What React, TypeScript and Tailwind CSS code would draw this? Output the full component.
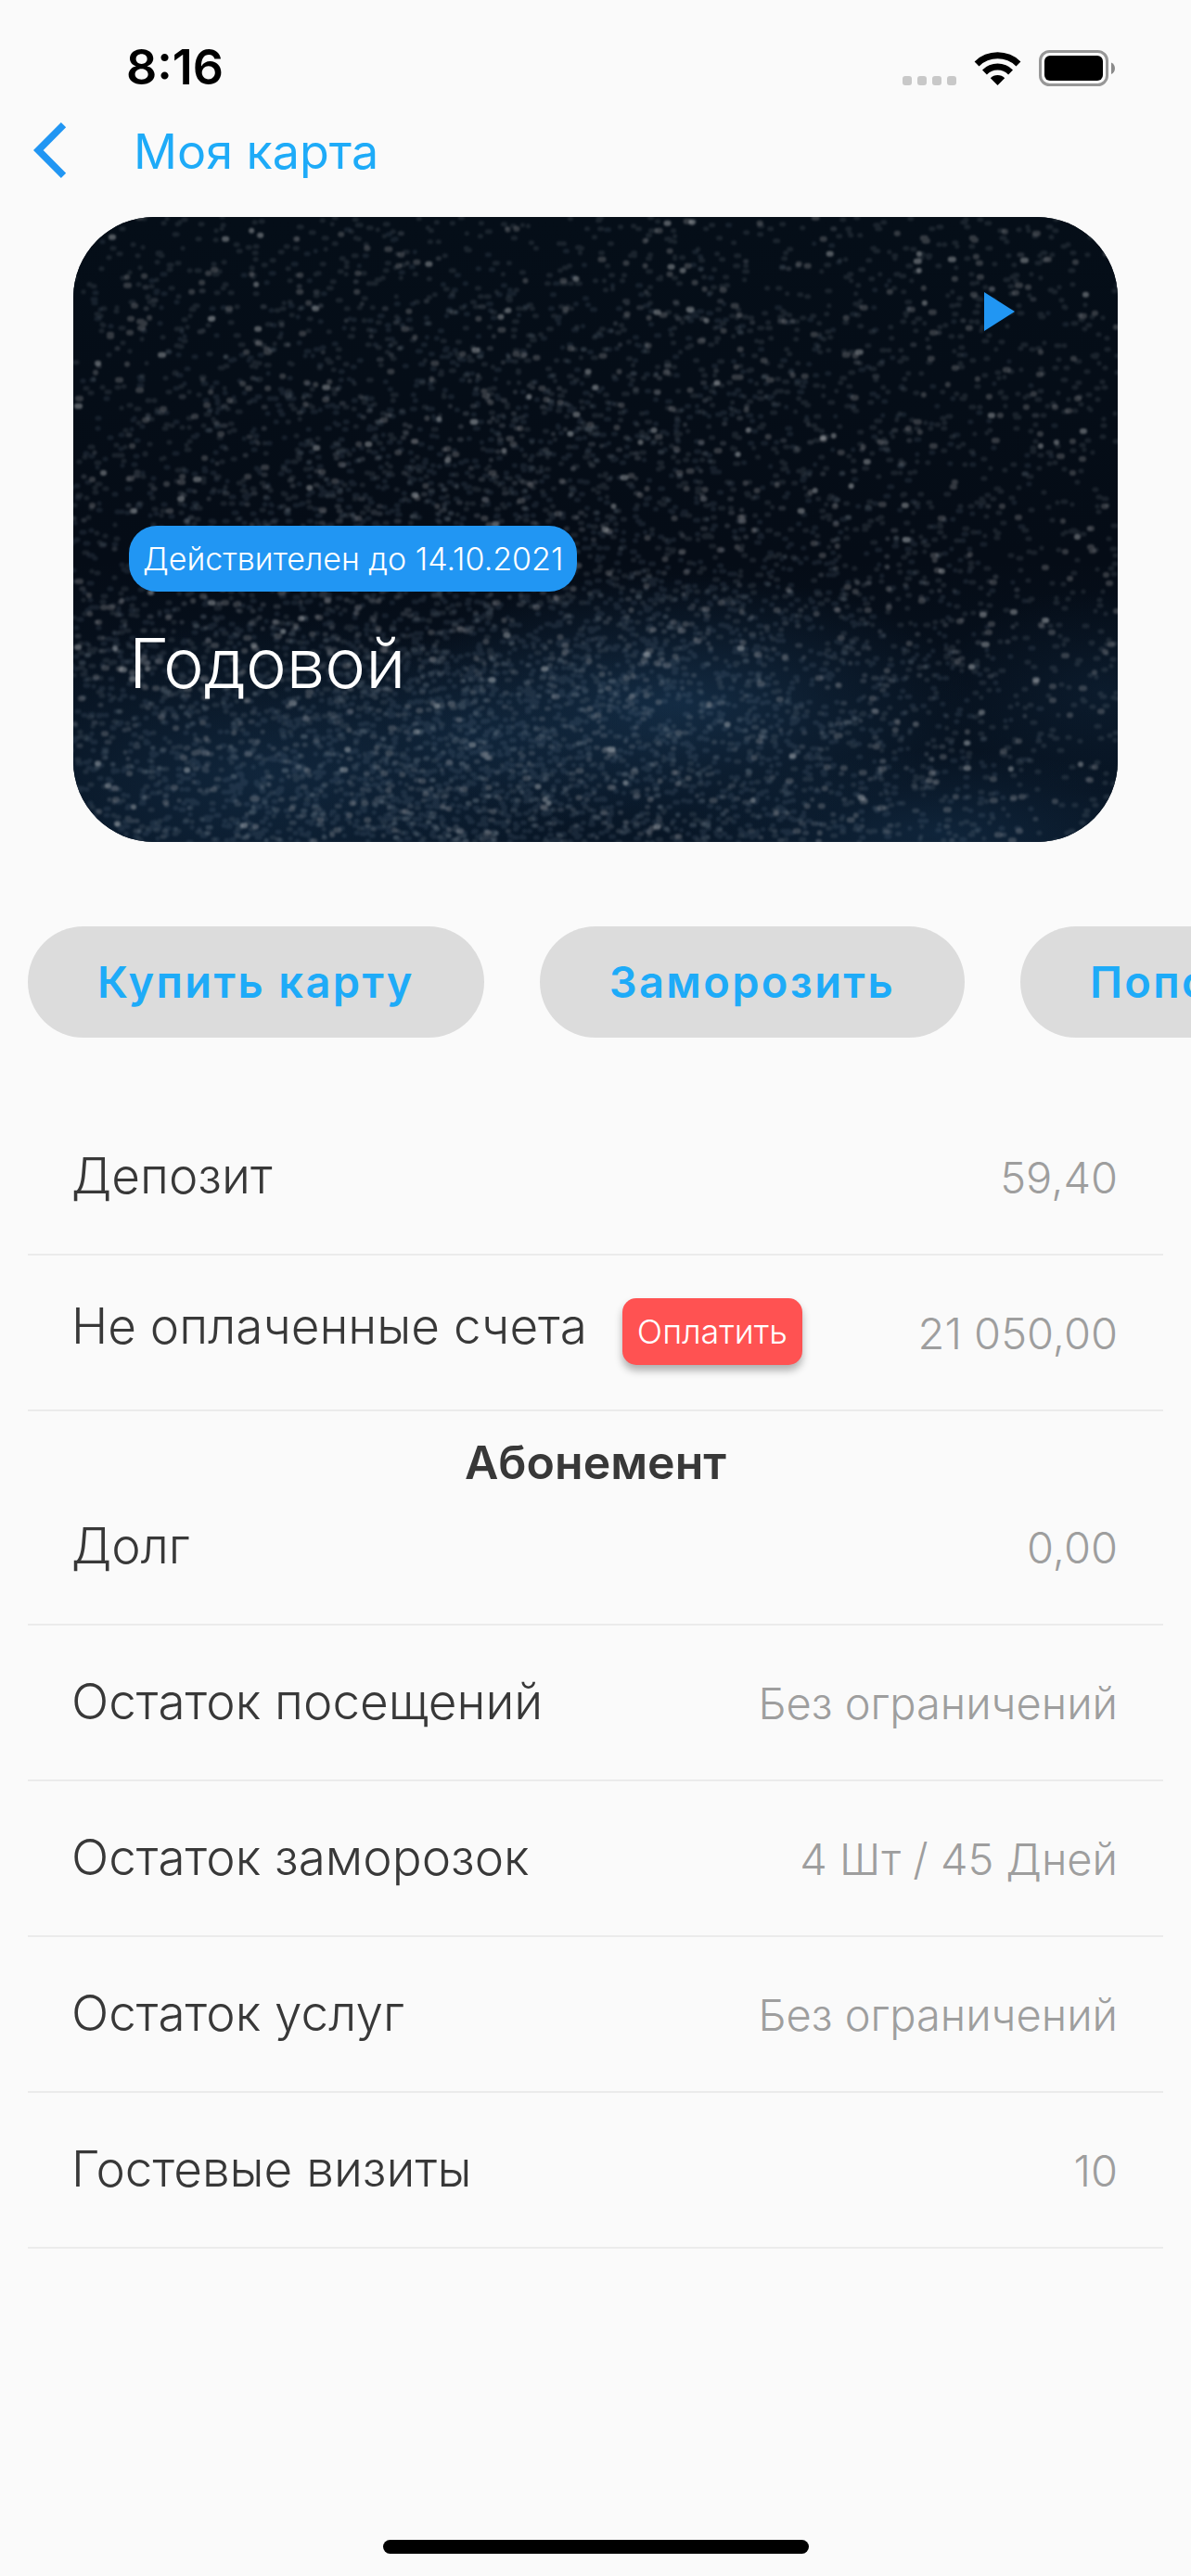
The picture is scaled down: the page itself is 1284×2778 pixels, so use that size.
import type { ReactNode } from "react";

const CARD_WIDTH = 1125;
const CARD_HEIGHT = 674;

const actions = ["Купить карту", "Заморозить", "Пополнить"];

const balances = [
  { label: "Депозит", value: "59,40" },
  { label: "Не оплаченные счета", value: "21 050,00", payable: true },
];

const membership = [
  { label: "Долг", value: "0,00" },
  { label: "Остаток посещений", value: "Без ограничений" },
  { label: "Остаток заморозок", value: "4 Шт / 45 Дней" },
  { label: "Остаток услуг", value: "Без ограничений" },
  { label: "Гостевые визиты", value: "10" },
];

// small seeded generator so the sky looks the same on every render
function createRandom(seed: number) {
  let state = seed;
  return () => {
    state = (state * 1664525 + 1013904223) % 4294967296;
    return state / 4294967296;
  };
}

function starPath(seed: number, count: number, dense: boolean) {
  const random = createRandom(seed);
  let d = "";
  for (let i = 0; i < count; i++) {
    const x = dense
      ? Math.round(((random() + random()) / 2) * 1300 - 230)
      : Math.round(random() * CARD_WIDTH);
    const y = dense
      ? Math.round(Math.sqrt(random()) * CARD_HEIGHT)
      : Math.round(random() * CARD_HEIGHT);
    d += `M${x} ${y}h${Math.round(random() * 3)}`;
  }
  return d;
}

const starLayers = [
  { d: starPath(7, 4200, true), width: 5, opacity: 0.13, color: "#8a9fb8" },
  { d: starPath(21, 3000, false), width: 5, opacity: 0.13, color: "#a9b1bd" },
  { d: starPath(35, 1000, true), width: 5, opacity: 0.18, color: "#b9bcc4" },
  { d: starPath(58, 560, false), width: 6, opacity: 0.24, color: "#c9c4c4" },
  { d: starPath(91, 130, false), width: 6, opacity: 0.38, color: "#d0d2d6" },
];

function StarrySky() {
  return (
    <svg
      className="absolute inset-0 h-full w-full"
      viewBox={`0 0 ${CARD_WIDTH} ${CARD_HEIGHT}`}
      preserveAspectRatio="xMidYMid slice"
      aria-hidden="true"
    >
      <defs>
        <linearGradient id="sky" x1="0" y1="0" x2="0" y2="1">
          <stop offset="0" stopColor="#050e18" />
          <stop offset="0.55" stopColor="#050c16" />
          <stop offset="1" stopColor="#081626" />
        </linearGradient>
        <radialGradient id="glow">
          <stop offset="0" stopColor="#234b70" stopOpacity="0.45" />
          <stop offset="0.5" stopColor="#234b70" stopOpacity="0.2" />
          <stop offset="1" stopColor="#234b70" stopOpacity="0" />
        </radialGradient>
        <filter id="soft">
          <feGaussianBlur stdDeviation="1" />
        </filter>
      </defs>
      <rect width={CARD_WIDTH} height={CARD_HEIGHT} fill="url(#sky)" />
      <ellipse cx="650" cy="525" rx="320" ry="140" fill="url(#glow)" />
      <ellipse cx="200" cy="600" rx="340" ry="170" fill="url(#glow)" opacity="0.7" />
      <ellipse cx="430" cy="560" rx="260" ry="110" fill="url(#glow)" opacity="0.4" />
      <ellipse cx="930" cy="665" rx="280" ry="90" fill="url(#glow)" opacity="0.6" />
      <ellipse cx="1110" cy="510" rx="180" ry="110" fill="url(#glow)" opacity="0.4" />
      <g filter="url(#soft)" fill="none" strokeLinecap="round">
        {starLayers.map((layer, i) => (
          <path
            key={i}
            d={layer.d}
            stroke={layer.color}
            strokeWidth={layer.width}
            strokeOpacity={layer.opacity}
          />
        ))}
      </g>
    </svg>
  );
}

function StatusBar() {
  return (
    <div className="flex h-[146px] items-center justify-between pl-[136px] pr-[82px]">
      <span className="text-[52px] font-semibold leading-[60px] text-black">8:16</span>
      <div className="flex items-end gap-[19px]">
        <svg className="mb-px" width="58" height="10" viewBox="0 0 58 10" fill="#c8c8c8" aria-hidden="true">
          <rect x="0" width="10" height="10" rx="3" />
          <rect x="16" width="10" height="10" rx="3" />
          <rect x="32" width="10" height="10" rx="3" />
          <rect x="48" width="10" height="10" rx="3" />
        </svg>
        <svg width="51" height="38" viewBox="0 0 51 38" aria-hidden="true">
          <path d="M0.6 11.4a35.5 35.5 0 0 1 49.8 0l-4.9 5a28.5 28.5 0 0 0-40 0z" />
          <path d="M9 20.4a23.4 23.4 0 0 1 33 0l-4.9 5a16.4 16.4 0 0 0-23.2 0z" />
          <path d="M17.8 29.2a11 11 0 0 1 15.4 0L25.5 37z" />
        </svg>
        <svg width="82" height="39" viewBox="0 0 82 39" aria-hidden="true">
          <rect x="1.5" y="1.5" width="72" height="36" rx="10" fill="none" stroke="#979797" strokeWidth="3" />
          <rect x="6" y="6" width="63" height="27" rx="6" />
          <path d="M78 13.5c5.3 2 5.3 10.5 0 12.5z" fill="#8a8a8a" />
        </svg>
      </div>
    </div>
  );
}

function Row({ label, value, children }: { label: string; value: string; children?: ReactNode }) {
  return (
    <li className="mx-[30px] flex h-[168px] items-center justify-between border-b-2 border-[#ebebeb] pb-0.5 pl-[47px] pr-[49px]">
      <div className="flex items-start gap-[38px]">
        <span className="text-[53px] leading-[60px] text-[#383838]">{label}</span>
        {children}
      </div>
      <span className="pt-1 text-[47px] leading-[60px] text-[#9e9e9e]">{value}</span>
    </li>
  );
}

export default function App() {
  return (
    <div className="flex min-h-screen flex-col overflow-hidden bg-[#fafafa] font-[Inter,'Liberation_Sans',sans-serif] font-light">
      <StatusBar />

      {/* Header */}
      <header className="-mt-3.5 flex h-[102px] items-start pl-9">
        <button type="button" aria-label="Назад">
          <svg width="36" height="60" viewBox="0 0 36 60" fill="none" stroke="#2196f3" strokeWidth="7.5">
            <path d="M32.5 2.7L5.3 30l27.2 27.3" />
          </svg>
        </button>
        <h1 className="pl-[72px] pt-0.5 text-[52px] font-normal leading-[60px] text-[#1eabf8]">Моя карта</h1>
      </header>

      {/* Membership card */}
      <section className="relative mx-[79px] flex h-[674px] flex-col items-start overflow-hidden rounded-[87px] bg-[#050d17] px-[60px] text-white">
        <StarrySky />
        <button type="button" aria-label="Открыть" className="relative mr-[51px] mt-[81px] self-end">
          <svg width="33" height="42" viewBox="0 0 33 42" fill="#2196f3">
            <path d="M0 0l33 21L0 42z" />
          </svg>
        </button>
        <span className="relative mt-[210px] rounded-[30px] bg-[#2196f3] px-[15px] text-[34px] leading-[71px]">
          Действителен до 14.10.2021
        </span>
        <h2 className="relative mt-8 text-[74px] leading-[90px]">Годовой</h2>
      </section>

      {/* Actions */}
      <div className="mt-[91px] flex gap-[60px] overflow-x-auto pl-[30px] [scrollbar-width:none]">
        {actions.map((action) => (
          <button
            key={action}
            type="button"
            className="h-[120px] shrink-0 rounded-full bg-[#dcdcdc] px-[75px] text-[47px] font-semibold tracking-wider text-[#1eabf8]"
          >
            {action}
          </button>
        ))}
      </div>

      <ul className="mt-[67px]">
        {balances.map((item) => (
          <Row key={item.label} label={item.label} value={item.value}>
            {item.payable && (
              <button
                type="button"
                className="h-[72px] rounded-[15px] bg-[#ff5252] px-4 text-[36px] text-white shadow-[0_6px_8px_rgba(0,0,0,0.3)]"
              >
                Оплатить
              </button>
            )}
          </Row>
        ))}
      </ul>

      <h2 className="h-[63px] pt-6 text-center text-[50px] font-semibold leading-[62px] text-[#383838]">
        Абонемент
      </h2>
      <ul>
        {membership.map((item) => (
          <Row key={item.label} label={item.label} value={item.value} />
        ))}
      </ul>

      {/* Home indicator */}
      <div className="mt-auto flex justify-center pb-6">
        <div className="h-[15px] w-[459px] rounded-full bg-black" />
      </div>
    </div>
  );
}
